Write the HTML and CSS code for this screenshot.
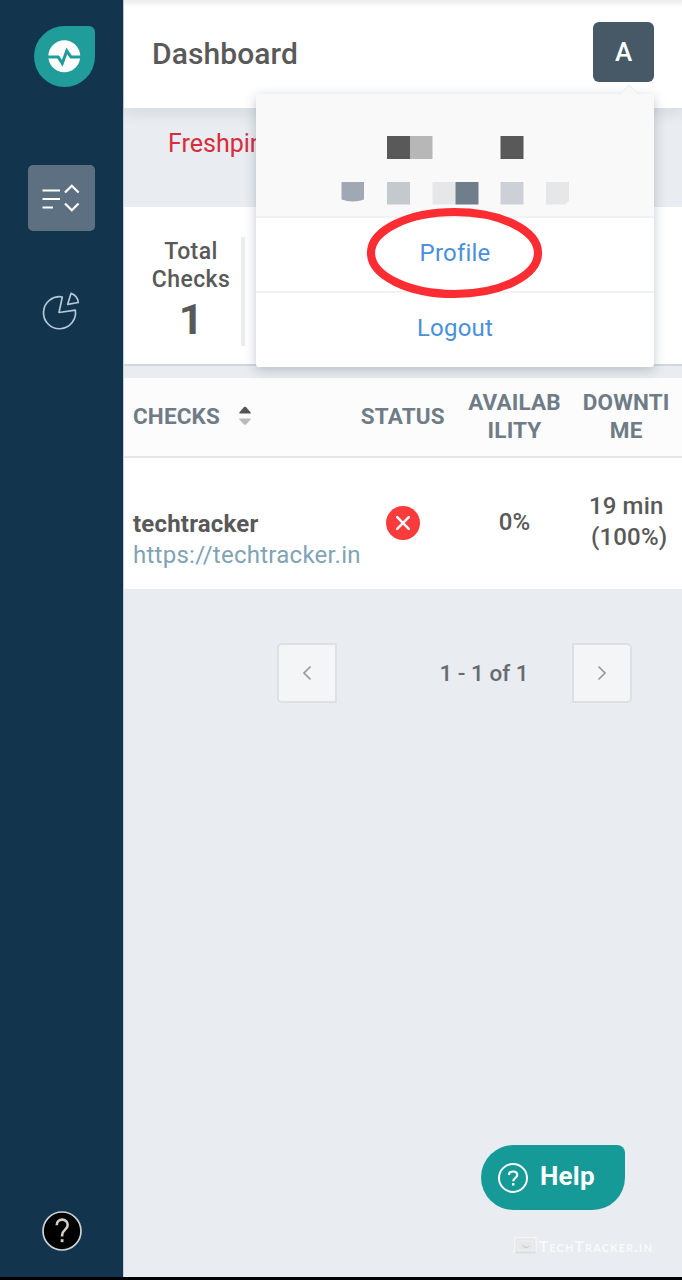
FILE: index.html
```html
<!DOCTYPE html>
<html lang="en">
<head>
<meta charset="utf-8">
<title>Dashboard</title>
<link rel="stylesheet" href="styles.css">
</head>
<body>
<div class="app">
  <nav class="sidebar">
    <svg class="logo" width="61" height="61" viewBox="0 0 61 61">
      <path fill="#209d9b" d="M30.5 0H55a6 6 0 0 1 6 6V30.5A30.5 30.5 0 1 1 30.500 0Z"/>
      <circle cx="30.300" cy="30.300" r="16" fill="#fff"/>
      <path d="M13.500 31H24.200L28.300 37.300L32.800 24.800L37 31H47.500" fill="none" stroke="#209d9b" stroke-width="3"/>
    </svg>
    <a class="nav-item active">
      <svg width="67" height="66" viewBox="0 0 67 66" fill="none" stroke="#fff" stroke-width="2.200">
        <path d="M14.500 25.500H32M14.500 34H32M14.500 42.500H25"/>
        <path d="M37 27.500L43.800 20.700L50.600 27.500M37 38.500L43.800 45.300L50.600 38.500"/>
      </svg>
    </a>
    <a class="nav-item">
      <svg width="67" height="66" viewBox="0 0 67 66" fill="none" stroke="#b4c6d7" stroke-width="1.700" stroke-linejoin="round">
        <path d="M34.300 18A16 16 0 1 0 47.300 31.200L31 33.500Z"/>
        <path d="M43 14.400Q49.500 16.500 50.300 23.500L39.700 25.300Z"/>
      </svg>
    </a>
    <svg class="side-help" width="40" height="40" viewBox="0 0 40 40" fill="none">
      <circle cx="20" cy="20" r="19" fill="#000" stroke="#ccd2d8" stroke-width="1.700"/>
      <path d="M14.700 14.200C14.700 6.800 25.700 6.800 25.700 14C25.700 18.600 20.100 18.700 20.100 24.300V25.500" stroke="#d3cec6" stroke-width="2.600"/>
      <rect x="18.700" y="28.200" width="2.800" height="3" fill="#d3cec6"/>
    </svg>
  </nav>
  <main class="main">
    <header class="topbar">
      <h1 class="title">Dashboard</h1>
      <div class="account">
        <button class="avatar">A</button>
        <div class="menu">
          <svg class="menu-arrow" width="20" height="11" viewBox="0 0 20 11"><path d="M0 11L10 1L20 11" fill="#f8f8f9" stroke="#e9eef2"/></svg>
          <div class="menu-user">
            <svg width="228" height="69" viewBox="0 0 228 69">
              <path fill="#595959" d="M46 0h23v23H46zM159.500 0h23v23h-23z"/>
              <path fill="#b7b7b7" d="M69 0h22.500v23H69z"/>
              <path fill="#a0a9b3" d="M.500 46h22.500v17.500q-11 4-22.500 0z"/>
              <path fill="#c4c9ce" d="M46 46h23v22.500H46z"/>
              <path fill="#e5e7e9" d="M91.500 46h23v22.500h-23zM205 46h23v19l-4 3.500h-19z"/>
              <path fill="#707d8b" d="M114.500 46h23v22.500h-23z"/>
              <path fill="#cdd0d6" d="M159.500 46h23v22.500h-23z"/>
            </svg>
          </div>
          <a class="menu-link">Profile
            <svg class="ring" width="176" height="92" viewBox="0 0 176 92"><ellipse cx="87.500" cy="46" rx="83.500" ry="41" fill="none" stroke="#fc2d32" stroke-width="8.200"/></svg>
          </a>
          <a class="menu-link">Logout</a>
        </div>
      </div>
    </header>
    <div class="notice">Freshping</div>
    <section class="stats">
      <div class="stat">
        <div class="stat-label">Total<br>Checks</div>
        <div class="stat-value">1</div>
      </div>
    </section>
    <section class="table">
      <div class="row head">
        <div class="cell-left">CHECKS
          <svg class="sort" width="12" height="20" viewBox="0 0 12 20"><path d="M.500 7.500Q0 7 .500 6.300L5 1Q6 .300 7 1L11.500 6.300Q12 7 11.500 7.500Z" fill="#555"/><path d="M.500 12.500Q0 13 .500 13.700L5 18.500Q6 19.200 7 18.500L11.500 13.700Q12 13 11.500 12.500Z" fill="#bbb"/></svg>
        </div>
        <div>STATUS</div>
        <div>AVAILAB<br>ILITY</div>
        <div class="head-down">DOWNTI<br>ME</div>
      </div>
      <div class="row body">
        <div class="check">
          <div class="check-name">techtracker</div>
          <div class="check-url">https://techtracker.in</div>
        </div>
        <div class="status"><svg width="34" height="34" viewBox="0 0 34 34"><circle cx="17" cy="17" r="17" fill="#fa3b3c"/><path d="M11.200 11.200L22.800 22.800M22.800 11.200L11.200 22.800" stroke="#fff" stroke-width="2.500" stroke-linecap="round"/></svg></div>
        <div class="avail">0%</div>
        <div class="down">19 min<br><span class="percent">(100%)</span></div>
      </div>
    </section>
    <div class="pager">
      <button class="page-btn prev"><svg width="10" height="16" viewBox="0 0 10 16"><path d="M8.500 1.500L2 8L8.500 14.500" fill="none" stroke="#999" stroke-width="1.700"/></svg></button>
      <span class="page-text">1 - 1 of 1</span>
      <button class="page-btn next"><svg width="10" height="16" viewBox="0 0 10 16"><path d="M1.500 1.500L8 8L1.500 14.500" fill="none" stroke="#999" stroke-width="1.700"/></svg></button>
    </div>
    <div class="corner">
      <button class="help">
        <svg width="30" height="30" viewBox="0 0 30 30" fill="none" stroke="#fff" stroke-width="2">
          <circle cx="15" cy="15" r="14"/>
          <path d="M11 12C11 7.300 19.200 7.300 19.200 12C19.200 15.300 15.200 14.800 15.200 18.300" stroke-width="2.200"/>
          <path d="M15.200 20.100V22.500" stroke-width="2.400"/>
        </svg>
        <span class="help-text">Help</span>
      </button>
      <div class="watermark">
        <svg width="23" height="17" viewBox="0 0 23 17"><rect x=".700" y=".700" width="21.500" height="15" rx="1" fill="#e5e7e9" stroke="#f7f7f7" stroke-width="1.200"/><path d="M1 15.800H22" stroke="#cfd1d3"/><path d="M4 4H19V13H4Z" stroke="#eff0f1" fill="none"/><path d="M8.500 8l2.500 3 1-1.500 1 1.500 2-2" stroke="#c9cbcd" fill="none"/></svg>
        <span class="mark-text">TechTracker.in</span>
      </div>
    </div>
  </main>
</div>
</body>
</html>
```
FILE: styles.css
```css
* { box-sizing: border-box; }
body { margin: 0; background: #000; font-family: Roboto, sans-serif; color: #595959; }
button { font-family: inherit; border: 0; padding: 0; }
svg { display: block; flex: none; }
.app { display: flex; width: 682px; height: 1277px; margin-bottom: 3px; overflow: hidden; }
.sidebar { position: relative; z-index: 3; width: 123px; flex: none; background: #12344d; display: flex; flex-direction: column; padding: 26px 0 26px 28px; }
.logo { margin: 0 0 78px 6px; }
.nav-item { width: 67px; height: 66px; border-radius: 5px; margin-bottom: 48px; }
.active { background: #5c7082; }
.side-help { margin: auto 0 0 14px; }
.main { flex: 1; min-width: 0; background: #e9ecf0; display: flex; flex-direction: column; border-left: 1px solid #c4cfd8; }
.topbar { position: relative; z-index: 2; height: 109px; flex: none; background: linear-gradient(#ececec, #fff 7px); display: flex; justify-content: space-between; padding: 22px 28px 0 28px; border-bottom: 1px solid #dbe1e6; box-shadow: 0 2px 16px rgba(18, 52, 77, .12); }
.title { margin: 14px 0 0; font-size: 30px; line-height: 36px; font-weight: 500; letter-spacing: .1px; }
.account { position: relative; }
.avatar { display: block; width: 61px; height: 60px; padding-bottom: 1px; border-radius: 6px; background: #475867; color: #fff; font-size: 26px; font-weight: 500; }
.menu { position: absolute; top: 72px; right: 0; width: 398px; height: 273px; background: #fff; border-radius: 3px; box-shadow: 0 3px 12px rgba(18, 52, 77, .25); }
.menu-arrow { position: absolute; right: 15px; top: -10px; }
.menu-user { height: 122px; padding-top: 42px; display: flex; justify-content: center; background: #f9f9f9; border-radius: 3px 3px 0 0; }
.menu-link { display: flex; align-items: center; justify-content: center; height: 75px; padding-bottom: 4px; border-top: 2px solid #f1f2f3; font-size: 24px; color: #4a90dc; letter-spacing: .2px; }
.ring { position: absolute; left: 111px; top: 113px; }
.notice { height: 98px; flex: none; padding: 20px 0 0 44px; font-size: 25px; line-height: 30px; color: #d72d3d; white-space: nowrap; }
.stats { height: 159px; flex: none; background: #fff; border-bottom: 2px solid #cfd7df; display: flex; padding: 30px 0 18px 12px; }
.stat { width: 109px; padding: 0 0 0 5px; border-right: 4px solid #e9edf0; text-align: center; }
.stat-label { font-size: 23px; line-height: 28px; font-weight: 500; letter-spacing: .4px; padding-top: 1px; }
.stat-value { font-size: 43px; line-height: 50px; font-weight: 700; }
.table { margin-top: 12px; background: #fff; flex: none; }
.row { display: grid; grid-template-columns: 223px 1fr 1fr 1fr; align-items: center; text-align: center; }
.head { height: 80px; padding-bottom: 2px; background: #fcfcfc; border-bottom: 2px solid #e4e7ea; font-size: 22.5px; line-height: 28px; font-weight: 700; color: #6f7c87; letter-spacing: .15px; }
.cell-left { display: flex; align-items: center; gap: 19px; padding-left: 9px; }
.body { height: 131px; align-items: start; font-size: 24px; line-height: 31px; white-space: nowrap; }
.check { text-align: left; padding: 51px 0 0 9px; }
.check-name { font-weight: 700; letter-spacing: .2px; }
.check-url { color: #7fa3b5; letter-spacing: .26px; }
.status { padding-top: 48px; display: flex; justify-content: center; }
.avail { padding-top: 49px; font-weight: 500; }
.down { padding-top: 33px; font-weight: 500; letter-spacing: .15px; }
.percent { padding-left: 6px; }
.pager { display: flex; align-items: center; margin: 54px 50px 0 153px; justify-content: space-between; }
.page-btn { width: 60px; height: 60px; display: grid; place-items: center; background: #f4f5f7; border: 2px solid #dee1e4; }
.prev { border-radius: 5px 0 0 5px; }
.next { border-radius: 0 5px 5px 0; }
.page-text { font-size: 22.5px; font-weight: 500; color: #666b70; margin-left: 59px; }
.corner { margin: auto 29px 23px auto; display: flex; flex-direction: column; align-items: flex-end; gap: 27px; }
.help { width: 144px; height: 65px; margin-right: 28px; padding-left: 17px; display: flex; align-items: center; gap: 12px; background: #169a98; color: #fff; border-radius: 33px 8px 33px 33px; font-size: 26px; font-weight: 700; }
.help-text { padding-bottom: 4px; letter-spacing: .2px; }
.watermark { display: flex; align-items: center; gap: 2px; height: 17px; color: #f9fafb; }
.mark-text { font-family: Lato, sans-serif; font-variant: small-caps; font-size: 15.5px; line-height: 17px; font-weight: 700; letter-spacing: 1.1px; padding-top: 1px; }
```
